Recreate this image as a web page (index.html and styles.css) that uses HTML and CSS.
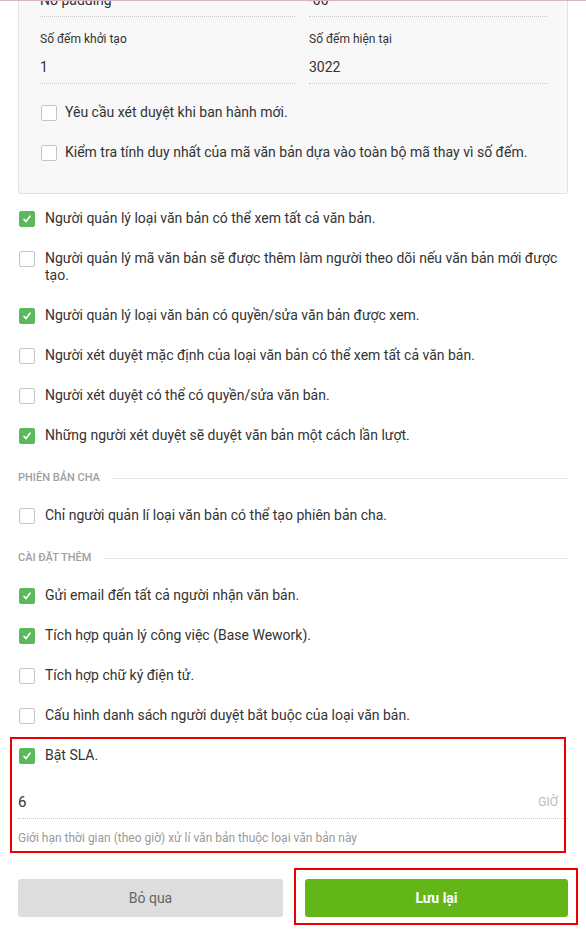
FILE: index.html
```html
<!DOCTYPE html>
<html lang="vi">
<head>
    <meta charset="UTF-8">
    <meta name="viewport" content="width=device-width, initial-scale=1.0">
    <title>Cài đặt loại văn bản</title>
    <link rel="stylesheet" href="styles.css">
</head>
<body>
    <div class="page-edge"></div>
    <div class="settings">
        <div class="code-box">
            <div class="fields">
                <div class="field">
                    <label>Tiền tố</label>
                    <div class="input">No padding</div>
                </div>
                <div class="field">
                    <label>Độ dài</label>
                    <div class="input">-00</div>
                </div>
                <div class="field">
                    <label>Số đếm khởi tạo</label>
                    <div class="input">1</div>
                </div>
                <div class="field">
                    <label>Số đếm hiện tại</label>
                    <div class="input">3022</div>
                </div>
            </div>
            <div class="options">
                <div class="option"><span class="check"></span><span>Yêu cầu xét duyệt khi ban hành mới.</span></div>
                <div class="option"><span class="check"></span><span>Kiểm tra tính duy nhất của mã văn bản dựa vào toàn bộ mã thay vì số đếm.</span></div>
            </div>
        </div>

        <div class="options">
            <div class="option"><span class="check on"></span><span>Người quản lý loại văn bản có thể xem tất cả văn bản.</span></div>
            <div class="option"><span class="check"></span><span>Người quản lý mã văn bản sẽ được thêm làm người theo dõi nếu văn bản mới được tạo.</span></div>
            <div class="option"><span class="check on"></span><span>Người quản lý loại văn bản có quyền/sửa văn bản được xem.</span></div>
            <div class="option"><span class="check"></span><span>Người xét duyệt mặc định của loại văn bản có thể xem tất cả văn bản.</span></div>
            <div class="option"><span class="check"></span><span>Người xét duyệt có thể có quyền/sửa văn bản.</span></div>
            <div class="option"><span class="check on"></span><span>Những người xét duyệt sẽ duyệt văn bản một cách lần lượt.</span></div>
        </div>

        <div class="section-title">Phiên bản cha</div>
        <div class="options">
            <div class="option"><span class="check"></span><span>Chỉ người quản lí loại văn bản có thể tạo phiên bản cha.</span></div>
        </div>

        <div class="section-title">Cài đặt thêm</div>
        <div class="options">
            <div class="option"><span class="check on"></span><span>Gửi email đến tất cả người nhận văn bản.</span></div>
            <div class="option"><span class="check on"></span><span>Tích hợp quản lý công việc (Base Wework).</span></div>
            <div class="option"><span class="check"></span><span>Tích hợp chữ ký điện tử.</span></div>
            <div class="option"><span class="check"></span><span>Cấu hình danh sách người duyệt bắt buộc của loại văn bản.</span></div>
        </div>

        <div class="sla">
            <div class="option"><span class="check on"></span><span>Bật SLA.</span></div>
            <div class="sla-input">
                <span class="sla-value">6</span>
                <span class="sla-unit">GIỜ</span>
            </div>
            <div class="hint">Giới hạn thời gian (theo giờ) xử lí văn bản thuộc loại văn bản này</div>
            <div class="mark mark-sla"></div>
        </div>

        <div class="actions">
            <button class="btn btn-cancel">Bỏ qua</button>
            <div class="save-wrap">
                <button class="btn btn-save">Lưu lại</button>
                <div class="mark mark-save"></div>
            </div>
        </div>
    </div>
</body>
</html>
```

FILE: styles.css
```css
body {
    margin: 0;
    background-color: #ffffff;
    font-family: Roboto, "Noto Sans", Arial, sans-serif;
    color: #333333;
    font-size: 14px;
}
.page-edge {
    position: fixed;
    top: 0;
    left: 0;
    right: 0;
    height: 1px;
    background-color: #d8b4c0;
    z-index: 5;
}
.settings {
    padding: 0 18px 30px;
}
.code-box {
    margin-top: -51px;
    background-color: #f8f8f8;
    border: 1px solid #e2e2e2;
    border-radius: 3px;
    padding: 14px 20px 32px 21px;
}
.fields {
    display: grid;
    grid-template-columns: 255px 1fr;
    column-gap: 14px;
    row-gap: 14px;
}
.field label {
    display: block;
    font-size: 12px;
    line-height: 16px;
    margin-bottom: 4px;
}
.field .input {
    height: 32px;
    line-height: 32px;
    font-size: 14px;
    border-bottom: 1px dotted #c8c8c8;
}
.options {
    display: flex;
    flex-direction: column;
    gap: 23px;
}
.code-box .options {
    margin-top: 20px;
}
.code-box .check {
    margin-right: 8px;
}
.settings > .options {
    margin-top: 16px;
}
.option {
    display: flex;
    align-items: flex-start;
    line-height: 17px;
}
.check {
    flex: none;
    width: 14px;
    height: 14px;
    margin: 1px 10px 0 1px;
    border: 1px solid #c4c4c4;
    border-radius: 2px;
    background-color: #ffffff;
}
.check.on {
    border-color: #5cb85c;
    background-color: #5cb85c;
    background-image: url("data:image/svg+xml;utf8,<svg xmlns='http://www.w3.org/2000/svg' width='14' height='14' viewBox='0 0 14 14'><path d='M4 7.4 L6 9.6 L10 4.2' fill='none' stroke='white' stroke-width='1.6' stroke-linecap='round' stroke-linejoin='round'/></svg>");
}
.section-title {
    display: flex;
    align-items: center;
    gap: 12px;
    margin: 27px 0 22px;
    font-size: 11px;
    line-height: 14px;
    font-weight: 500;
    color: #a0a0a0;
    text-transform: uppercase;
}
.section-title::after {
    content: "";
    flex: 1;
    height: 1px;
    background-color: #e6e6e6;
}
.sla {
    position: relative;
    margin-top: 23px;
}
.sla-input {
    display: flex;
    justify-content: space-between;
    align-items: center;
    margin-top: 22px;
    height: 32px;
    border-bottom: 1px dotted #c8c8c8;
}
.sla-value {
    font-size: 15px;
}
.sla-unit {
    font-size: 12px;
    color: #bbbbbb;
    margin-right: 10px;
}
.hint {
    margin-top: 11px;
    font-size: 12px;
    line-height: 16px;
    color: #999999;
}
.mark {
    position: absolute;
    border: 2px solid #ee0000;
    pointer-events: none;
}
.mark-sla {
    top: -10px;
    bottom: -7px;
    left: -8px;
    right: 2px;
}
.actions {
    display: grid;
    grid-template-columns: 265px 1fr;
    column-gap: 22px;
    margin-top: 33px;
}
.save-wrap {
    position: relative;
}
.mark-save {
    top: -11px;
    bottom: -8px;
    left: -11px;
    right: -10px;
}
.btn {
    display: block;
    width: 100%;
    height: 38px;
    border: none;
    border-radius: 3px;
    font-family: inherit;
    font-size: 14px;
    cursor: pointer;
}
.btn-cancel {
    background-color: #dddddd;
    color: #666666;
}
.btn-save {
    background-color: #63b617;
    color: #ffffff;
    font-weight: bold;
}
```
